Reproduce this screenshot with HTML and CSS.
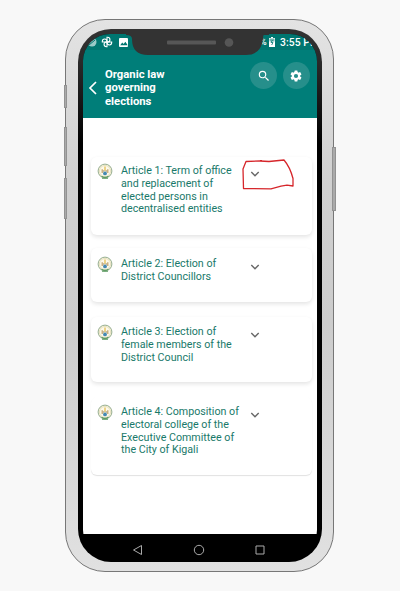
FILE: index.html
```html
<!DOCTYPE html>
<html lang="en">
<head>
<meta charset="utf-8">
<title>Organic law governing elections</title>
<link rel="stylesheet" href="styles.css">
</head>
<body>
<svg class="defs" width="0" height="0" aria-hidden="true">
  <symbol id="seal" viewBox="0 0 16 17">
    <circle cx="8" cy="8" r="6.900" fill="#f8f4dc" stroke="#8aa587" stroke-width=".9"/>
    <circle cx="8" cy="8" r="5.500" fill="#fdf9ea" stroke="#d6d2aa" stroke-width=".6"/>
    <path d="M5.200 10V6.300M10.800 10V6.300" stroke="#bd9f68" stroke-width="1.200"/>
    <path d="M8 3.600v4.600" stroke="#e6c45d" stroke-width="1.400"/>
    <path d="M6.700 7v2M9.300 7v2" stroke="#a79a86" stroke-width=".8"/>
    <circle cx="8" cy="10.400" r="1.900" fill="#4488b2"/>
    <path d="M4.500 13.300q3.500 2 7 0M5 15.200h6" fill="none" stroke="#5a9a60" stroke-width="1.100"/>
  </symbol>
  <symbol id="chevron" viewBox="0 0 10 8"><path d="M1.300 2l3.700 3.700L8.700 2" fill="none" stroke="#666" stroke-width="1.400"/></symbol>
</svg>
<div class="phone">
  <i class="key key-mute"></i><i class="key key-up"></i><i class="key key-down"></i><i class="key key-power"></i>
  <div class="bezel">
    <div class="screen">
      <div class="status">
        <svg class="status-left" width="50" height="16" viewBox="0 0 50 16">
          <circle cx="9" cy="8" r="4.500" fill="#9bcac7"/><path d="M6 11l6-5" stroke="#007670"/>
          <g fill="none" stroke="#fff" stroke-width="1.100">
            <path id="blade" d="M24 8V3.300h.6a2.300 2.300 0 0 1 0 4.700z"/>
            <use href="#blade" transform="rotate(90 24 8)"/><use href="#blade" transform="rotate(180 24 8)"/><use href="#blade" transform="rotate(270 24 8)"/>
          </g>
          <rect x="36" y="4" width="9" height="9" rx="1" fill="#fff"/><path d="M37.200 11.200l2-2.700 1.400 1.600 1.800-2.300 2.300 3.400z" fill="#007670"/>
        </svg>
        <div class="status-right">
          <span class="percent">%</span>
          <svg class="battery" width="6" height="10" viewBox="0 0 6 10"><path d="M2 0h2v1h2v9H0V1h2z" fill="#fff"/><path d="M.5 1.500h5v3h-5z" fill="#72b5b1"/><path d="M3.500 3L2 5.500h2L2.700 8" fill="none" stroke="#007670" stroke-width=".8"/></svg>
          <span class="time">3:55 PM</span>
        </div>
      </div>
      <header class="header">
        <svg class="back" width="10" height="16" viewBox="0 0 10 16"><path d="M8 2L2 8l6 6" fill="none" stroke="#fff" stroke-width="1.700"/></svg>
        <h1>Organic law<br>governing<br>elections</h1>
        <div class="actions">
          <span class="round"><svg width="14" height="14" viewBox="0 0 24 24" fill="#fff"><path d="M15.500 14h-.79l-.28-.27A6.470 6.470 0 0 0 16 9.500 6.500 6.500 0 1 0 9.500 16c1.610 0 3.090-.59 4.230-1.570l.27.28v.79l5 4.990L20.490 19l-4.990-5zm-6 0A4.500 4.500 0 1 1 14 9.500 4.500 4.500 0 0 1 9.500 14z"/></svg></span>
          <span class="round"><svg class="gear" width="14" height="14" viewBox="0 0 24 24" fill="#fff"><path d="M19.140 12.940c.04-.3.060-.61.060-.94s-.02-.64-.07-.94l2.030-1.580a.49.49 0 0 0 .12-.61l-1.920-3.320a.49.49 0 0 0-.59-.22l-2.390.96a7 7 0 0 0-1.620-.94l-.36-2.540a.48.48 0 0 0-.48-.41h-3.840a.48.48 0 0 0-.47.41l-.36 2.540a7.300 7.300 0 0 0-1.620.94l-2.390-.96a.48.48 0 0 0-.59.22L2.740 8.870a.48.48 0 0 0 .12.61l2.030 1.580a6 6 0 0 0 0 1.880l-2.030 1.580a.49.49 0 0 0-.12.61l1.920 3.320c.12.22.37.290.59.220l2.390-.96c.5.380 1.030.7 1.620.94l.36 2.540c.05.240.24.410.48.410h3.840c.24 0 .44-.17.470-.41l.36-2.540a7 7 0 0 0 1.620-.94l2.390.96c.22.080.47 0 .59-.22l1.920-3.320a.48.48 0 0 0-.12-.61zM12 15.600a3.600 3.600 0 1 1 0-7.200 3.600 3.600 0 0 1 0 7.200z"/></svg></span>
        </div>
      </header>
      <main class="list">
        <article class="card card-1">
          <svg class="seal"><use href="#seal"/></svg>
          <p>Article 1: Term of office<br>and replacement of<br>elected persons in<br>decentralised entities</p>
          <svg class="chevron"><use href="#chevron"/></svg>
          <svg class="markup" width="54" height="32" viewBox="0 0 54 32"><path d="M1.500 29.500L1 10l3-7.500 14-.5 9 .5 15-1.500q6 7 9 18.500v7.500l-6-.8-6 1-10 2.600zM19 1v2" fill="none" stroke="#d6262b" stroke-width="1.300" stroke-linejoin="round"/></svg>
        </article>
        <article class="card card-2">
          <svg class="seal"><use href="#seal"/></svg>
          <p>Article 2: Election of<br>District Councillors</p>
          <svg class="chevron"><use href="#chevron"/></svg>
        </article>
        <article class="card card-3">
          <svg class="seal"><use href="#seal"/></svg>
          <p>Article 3: Election of<br>female members of the<br>District Council</p>
          <svg class="chevron"><use href="#chevron"/></svg>
        </article>
        <article class="card card-4">
          <svg class="seal"><use href="#seal"/></svg>
          <p>Article 4: Composition of<br>electoral college of the<br>Executive Committee of<br>the City of Kigali</p>
          <svg class="chevron"><use href="#chevron"/></svg>
        </article>
      </main>
      <nav class="nav">
        <svg width="12" height="12" viewBox="0 0 12 12"><path d="M9.500 1.500v9L1.500 6z"/></svg>
        <svg width="12" height="12" viewBox="0 0 12 12"><circle cx="6" cy="6" r="4.700"/></svg>
        <svg width="12" height="12" viewBox="0 0 12 12"><path d="M2 2h8v8H2z"/></svg>
      </nav>
    </div>
    <svg class="notch" width="143" height="26" viewBox="0 0 143 26">
      <path d="M0 0H143V5H138Q137 5 137 9Q135 25 120 25H22Q6 25 6 9Q6 5 0 5z" fill="#333"/>
      <rect x="41" y="10.500" width="49" height="4" rx="1" fill="#575757"/>
      <circle cx="103" cy="12.500" r="4.300" fill="#565656"/>
    </svg>
  </div>
</div>
</body>
</html>
```
FILE: styles.css
```css
* { box-sizing: border-box; }
body {
  margin: 0;
  height: 591px;
  padding: 19px 0 0 65px;
  background: #f8f8f8;
  font-family: Roboto, "Liberation Sans", sans-serif;
  overflow: hidden;
}
.defs { position: absolute; }
.phone {
  position: relative;
  width: 269px;
  height: 553px;
  padding: 9px 12px 9px;
  border: 1px solid #777;
  border-radius: 40px;
  background: linear-gradient(#e3e3e3, #d0d0d0 30%, #ccc 55%, #e1e1e1);
}
.key {
  position: absolute;
  width: 3px;
  border: 1px solid #929292;
  background: #aaa;
}
.key-mute { left: -2px; top: 65px; height: 23px; }
.key-up { left: -2px; top: 107px; height: 39px; }
.key-down { left: -2px; top: 158px; height: 41px; }
.key-power { right: -3px; top: 127px; height: 64px; width: 4px; }
.bezel {
  position: relative;
  width: 244px;
  height: 533px;
  padding: 5px;
  border-radius: 33px;
  background: linear-gradient(#333, #292929 35px, #000 115px);
  overflow: hidden;
}
.screen {
  display: flex;
  flex-direction: column;
  height: 523px;
  border-radius: 27px;
  background: #000;
  overflow: hidden;
}
.status {
  display: flex;
  justify-content: space-between;
  flex: 0 0 16px;
  background: #007670;
  color: #fff;
}
.status-right {
  display: flex;
  align-items: center;
  width: 57px;
  overflow: hidden;
  font-size: 10.3px;
  font-weight: 500;
  white-space: nowrap;
}
.percent { flex: 0 0 7px; margin-right: 2px; font-size: 9px; }
.battery { flex: none; }
.time { margin-left: 5px; letter-spacing: .1px; }
.header {
  display: flex;
  flex: 0 0 68px;
  padding: 0 7px 0 5px;
  background: #007e79;
  color: #fff;
}
.back { margin: 30px 7px 0 0; }
h1 {
  width: 145px;
  margin: 18px 0 0;
  font-size: 11.3px;
  line-height: 13.3px;
  font-weight: 700;
}
.actions { display: flex; gap: 6px; margin: 12px 0 0; }
.round {
  display: flex;
  align-items: center;
  justify-content: center;
  width: 27px;
  height: 27px;
  border-radius: 50%;
  background: #268f8b;
}
.gear { margin-right: 1px; }
.list { flex: 1; padding: 39px 5px 0 8px; background: #fff; }
.card {
  position: relative;
  display: flex;
  align-items: flex-start;
  padding: 7px 0 0 6px;
  border-radius: 6px;
  background: #fff;
  box-shadow: 0 2px 4px rgba(0, 0, 0, .11);
}
.card-1 { height: 78px; margin-bottom: 13px; padding-top: 6px; }
.card-2 { height: 54px; margin-bottom: 15px; padding-top: 8px; }
.card-3 { height: 65px; margin-bottom: 15px; }
.card-4 { height: 78px; box-shadow: 0 1px 1px rgba(0, 0, 0, .12); }
.seal { flex: none; width: 16px; height: 17px; }
.card p {
  flex: none;
  width: 137px;
  margin: 2px 0 0;
  padding-left: 8px;
  color: #19796a;
  font-size: 10.7px;
  line-height: 12.8px;
  white-space: nowrap;
}
.chevron { flex: none; width: 10px; height: 8px; margin-top: 7px; }
.markup { position: absolute; left: 151px; top: 2px; }
.nav {
  display: flex;
  justify-content: center;
  gap: 49px;
  flex: 0 0 23px;
  padding: 10px 3px 0 0;
  background: #000;
}
.nav svg { overflow: visible; fill: none; stroke: #aaa; stroke-width: 1; }
.notch { position: absolute; left: 48px; top: 1px; }
```
